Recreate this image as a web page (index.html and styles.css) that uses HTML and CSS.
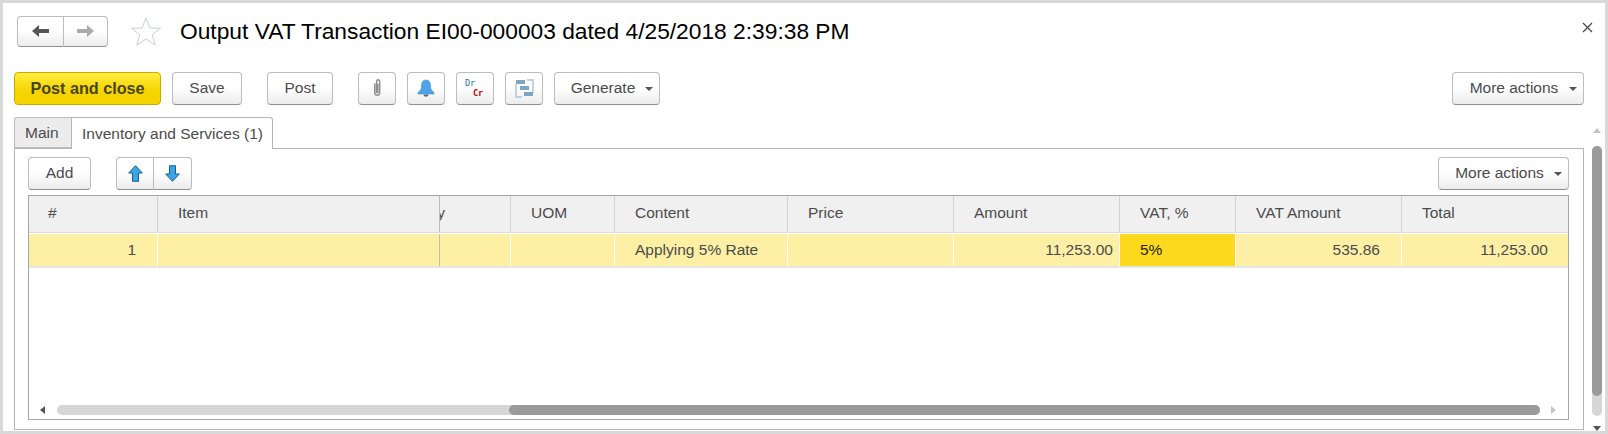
FILE: index.html
```html
<!DOCTYPE html>
<html lang="en">
<head>
<meta charset="utf-8">
<title>Output VAT Transaction</title>
<link rel="stylesheet" href="styles.css">
</head>
<body>
<div class="window">
  <header class="title-bar">
    <div class="btn-group nav-group">
      <button class="btn seg seg-nav"><svg width="17" height="12" viewBox="0 0 17 12"><path d="M0 6 7 0V4H17V8H7V12Z" fill="#555"/></svg></button>
      <button class="btn seg seg-nav"><svg width="17" height="12" viewBox="0 0 17 12"><path d="M17 6 10 0V4H0V8H10V12Z" fill="#aaa"/></svg></button>
    </div>
    <svg class="star" width="30" height="29" viewBox="0 0 30 29"><path d="M15 1 19 11 29.500 11.300 21.300 17.700 24.200 28 15 22 5.800 28 8.700 17.700 .5 11.300 11 11Z" fill="#fff" stroke="#c9ced3"/></svg>
    <h1 class="title">Output VAT Transaction EI00-000003 dated 4/25/2018 2:39:38 PM</h1>
    <svg class="close" width="11" height="11" viewBox="0 0 11 11"><path d="M1 1 10 10M10 1 1 10" stroke="#444" stroke-width="1.200" fill="none"/></svg>
  </header>

  <div class="toolbar">
    <button class="btn btn-primary">Post and close</button>
    <button class="btn btn-save">Save</button>
    <button class="btn btn-post">Post</button>
    <button class="btn btn-icon"><svg width="12" height="20" viewBox="0 0 12 22"><path d="M3.500 6V16C3.500 20 9 20 9 16V5C9 1 5.500 1 5.500 5V15C5.500 16.500 7 16.500 7 15V6" fill="none" stroke="#8f8f8f" stroke-width="1.600"/></svg></button>
    <button class="btn btn-icon"><svg width="18" height="19" viewBox="0 0 18 19"><path d="M9 1C12.500 1 13.500 4 13.500 7C13.500 10.500 15 12 17 13.500V15H1V13.500C3 12 4.500 10.500 4.500 7C4.500 4 5.500 1 9 1Z" fill="#4da3e8" stroke="#3f8fd2" stroke-width=".6"/><path d="M6.500 15.500H11.500C11.500 18.500 6.500 18.500 6.500 15.500Z" fill="#666"/></svg></button>
    <button class="btn btn-icon btn-drcr"><span class="dr">Dr</span><span class="cr">Cr</span></button>
    <button class="btn btn-icon"><svg width="19" height="19" viewBox="0 0 19 19"><path d="M1 5V18H7M18 14V1H12" fill="none" stroke="#a9c4da" stroke-width="1.400"/><rect x="1" y="1" width="9" height="4" fill="#7ea6c4"/><rect x="5" y="7" width="9" height="4" fill="#7ea6c4"/><rect x="9" y="13" width="9" height="4" fill="#7ea6c4"/></svg></button>
    <button class="btn btn-menu btn-generate">Generate<span class="caret"></span></button>
    <button class="btn btn-menu btn-more">More actions<span class="caret"></span></button>
  </div>

  <div class="tabs">
    <div class="tab">Main</div>
    <div class="tab tab-active">Inventory and Services (1)</div>
  </div>

  <section class="panel">
    <div class="panel-tools">
      <button class="btn btn-add">Add</button>
      <div class="btn-group move-group">
        <button class="btn seg seg-move"><svg width="15" height="17" viewBox="0 0 15 17"><path d="M7.500 .7 14.300 8H10.500V16.300H4.500V8H.7Z" fill="#3da5e6" stroke="#14608f"/></svg></button>
        <button class="btn seg seg-move"><svg width="15" height="17" viewBox="0 0 15 17"><path d="M7.500 16.300 14.300 9H10.500V.7H4.500V9H.7Z" fill="#3da5e6" stroke="#14608f"/></svg></button>
      </div>
      <button class="btn btn-menu btn-more btn-more-inner">More actions<span class="caret"></span></button>
    </div>

    <div class="grid">
      <div class="grid-row grid-head">
        <div class="cell cell-first">#</div>
        <div class="cell cell-frozen">Item</div>
        <div class="cell cell-clipped"><span>Quantity</span></div>
        <div class="cell">UOM</div>
        <div class="cell">Content</div>
        <div class="cell">Price</div>
        <div class="cell">Amount</div>
        <div class="cell">VAT, %</div>
        <div class="cell">VAT Amount</div>
        <div class="cell">Total</div>
      </div>
      <div class="grid-row grid-data">
        <div class="cell cell-num cell-index">1</div>
        <div class="cell cell-frozen"></div>
        <div class="cell"></div>
        <div class="cell"></div>
        <div class="cell">Applying 5% Rate</div>
        <div class="cell"></div>
        <div class="cell cell-num cell-amount">11,253.00</div>
        <div class="cell cell-active">5%</div>
        <div class="cell cell-num cell-vat-amount">535.86</div>
        <div class="cell cell-num">11,253.00</div>
      </div>
      <div class="grid-fill"></div>
      <div class="hscroll">
        <span class="arrow arrow-left"></span>
        <div class="hscroll-track"><div class="hscroll-thumb"></div></div>
        <span class="arrow arrow-right"></span>
      </div>
    </div>
  </section>

  <div class="vscroll">
    <span class="arrow arrow-up"></span>
    <div class="vscroll-track"><div class="vscroll-thumb"></div></div>
    <span class="arrow arrow-down"></span>
  </div>
</div>
</body>
</html>
```

FILE: styles.css
```css
* { box-sizing: border-box; }
html, body { margin: 0; padding: 0; }
body {
  width: 1608px;
  height: 434px;
  overflow: hidden;
  background: #d9d9d9;
  font-family: "Liberation Sans", Arial, sans-serif;
  font-size: 15.500px;
  color: #4b4b4b;
}
.window {
  position: relative;
  width: 1602px;
  height: 428px;
  margin: 3px;
  background: #fff;
  display: flex;
  flex-direction: column;
  padding: 0 21px 0 11px;
}
.title-bar {
  display: flex;
  align-items: center;
  height: 31px;
  margin-top: 13px;
  padding-left: 3px;
  position: relative;
}
.title {
  margin: 0 0 0 19px;
  font-size: 22.770px;
  font-weight: 400;
  color: #000;
  white-space: nowrap;
}
.star { margin-left: 23px; }
.close { position: absolute; right: -9px; top: 6px; }

.btn {
  font: inherit;
  color: inherit;
  height: 33px;
  padding: 0 0 1px;
  background: linear-gradient(#fff 45%, #ececec);
  border: 1px solid #bcbcbc;
  border-bottom-color: #909090;
  border-radius: 4px;
  display: inline-flex;
  align-items: center;
  justify-content: center;
  flex: none;
}
.btn-group { display: flex; flex: none; }
.seg { border-radius: 0; }
.seg:first-child { border-radius: 4px 0 0 4px; }
.seg:last-child { border-radius: 0 4px 4px 0; border-left: 0; }
.seg-nav { height: 31px; width: 47px; }
.seg-nav:last-child { width: 44px; }
.seg-move { width: 38px; }

.toolbar {
  display: flex;
  align-items: center;
  height: 33px;
  margin-top: 25px;
}
.btn-primary {
  width: 147px;
  background: linear-gradient(#ffed3f, #f5d400 60%);
  border-color: #c9ab00;
  font-size: 16.200px;
  font-weight: 700;
  color: #4a4320;
}
.btn-save { width: 70px; margin-left: 11px; }
.btn-post { width: 66px; margin-left: 25px; }
.btn-icon { width: 38px; margin-left: 11px; }
.btn-post + .btn-icon { margin-left: 25px; }
.btn-drcr {
  flex-direction: column;
  font-family: "DejaVu Sans Mono", monospace;
  font-size: 8.500px;
  line-height: 10px;
  align-items: flex-start;
  padding-left: 8px;
}
.dr { color: #2f6ea5; }
.cr { color: #c40000; font-weight: 700; margin-left: 8px; }
.btn-menu { position: relative; padding-right: 8px; }
.btn-generate { width: 106px; margin-left: 11px; }
.btn-more { width: 132px; margin-left: auto; }
.caret {
  position: absolute;
  right: 6px;
  top: 14px;
  border: 4px solid transparent;
  border-top: 4px solid #555;
  border-bottom: 0;
}

.tabs {
  display: flex;
  height: 32px;
  margin-top: 12px;
  margin-bottom: -1px;
  position: relative;
  z-index: 1;
}
.tab {
  height: 31px;
  margin-top: 0;
  padding: 0 10px;
  display: flex;
  align-items: center;
  background: #ececec;
  border: 1px solid #bdbdbd;
  border-radius: 3px 0 0 0;
  border-right: 0;
  width: 57px;
  white-space: nowrap;
}
.tab-active {
  width: 202px;
  height: 32px;
  background: #fff;
  border: 1px solid #b5b5b5;
  border-bottom: 0;
  border-radius: 0 3px 0 0;
}

.panel {
  height: 282px;
  border: 1px solid #b5b5b5;
  padding: 8px 14px 9px 13px;
  display: flex;
  flex-direction: column;
}
.panel-tools {
  display: flex;
  height: 33px;
  flex: none;
}
.btn-add { width: 63px; }
.move-group { margin-left: 25px; }
.btn-more-inner { width: 131px; }

.grid {
  margin-top: 5px;
  flex: 1;
  border: 1px solid #a6a6a6;
  display: flex;
  flex-direction: column;
  min-height: 0;
}
.grid-row {
  display: grid;
  grid-template-columns: 129px 282px 71px 104px 173px 166px 166px 116px 166px 166px;
  flex: none;
}
.grid-head { height: 37px; background: #f0f0f0; border-bottom: 1px solid #dcdcdc; }
.grid-data { height: 35px; background: #fdf0a5; border-top: 1px solid #fff; border-bottom: 2px solid #e6e6e6; }
.cell {
  display: flex;
  align-items: center;
  padding: 0 20px;
  border-right: 1px solid #fff;
  white-space: nowrap;
  overflow: hidden;
}
.grid-head .cell { border-right: 1px solid #d2d2d2; padding-bottom: 2px; }
.grid-head .cell:last-child,
.grid-data .cell:last-child { border-right: 0; }
.cell-frozen, .grid-data .cell-frozen, .grid-head .cell-frozen { border-right: 1px solid #bdbdbd; }
.cell-first { padding-left: 19px; }
.grid-head .cell-clipped { justify-content: flex-end; padding-left: 0; padding-right: 65px; }
.cell-clipped span { flex: none; }
.cell-num { justify-content: flex-end; }
.cell-index { padding-right: 21px; }
.cell-amount { padding-right: 6px; }
.cell-vat-amount { padding-right: 21px; }
.cell-active { background: #fdd91e; color: #222; }
.grid-fill { flex: 1; }

.hscroll {
  flex: none;
  height: 10px;
  margin-bottom: 4px;
  display: flex;
  align-items: center;
  padding: 0 12px 0 11px;
}
.hscroll-track {
  flex: 1;
  height: 10px;
  margin: 0 11px 0 12px;
  background: #d6d6d6;
  border-radius: 5px;
  display: flex;
  justify-content: flex-end;
}
.hscroll-thumb {
  width: 1031px;
  height: 10px;
  background: #9a9a9a;
  border-radius: 5px;
}
.arrow { flex: none; width: 0; height: 0; border: 4px solid transparent; }
.arrow-left { border-left: 0; border-right: 5px solid #555; }
.arrow-right { border-right: 0; border-left: 5px solid #c4c4c4; }
.arrow-up { border-top: 0; border-bottom: 5px solid #c4c4c4; }
.arrow-down { border-bottom: 0; border-top: 5px solid #555; }

.vscroll {
  position: absolute;
  right: 3px;
  top: 125px;
  bottom: 0;
  width: 10px;
  display: flex;
  flex-direction: column;
  align-items: center;
}
.vscroll-track {
  width: 10px;
  height: 274px;
  margin-top: 13px;
  background: #d6d6d6;
  border-radius: 5px;
}
.vscroll-thumb {
  height: 250px;
  background: #9a9a9a;
  border-radius: 5px;
}
.vscroll .arrow-down { margin-top: 10px; }
```
